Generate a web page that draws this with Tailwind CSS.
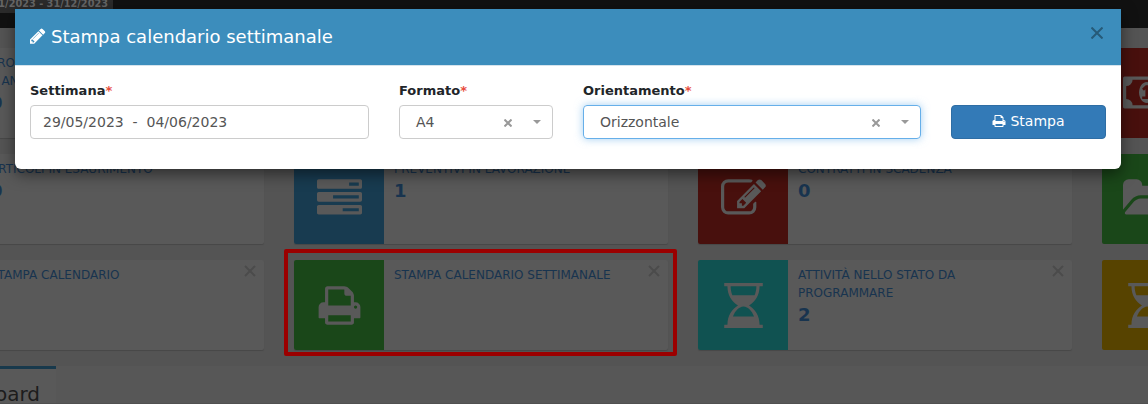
<!DOCTYPE html>
<html lang="it">
<head>
<meta charset="utf-8">
<title>Stampa calendario settimanale</title>
<script src="https://cdn.jsdelivr.net/npm/@tailwindcss/browser@4"></script>
</head>
<body class="relative h-[404px] w-[1148px] overflow-hidden bg-[#545454] font-['DejaVu_Sans',sans-serif] text-sm">
<svg class="hidden">
  <symbol id="print" viewBox="0 0 1792 1792"><path d="M448 1536h896v-256h-896v256zm0-640h896v-384h-160q-40 0-68-28t-28-68v-160h-640v640zm1152 64q0-26-19-45t-45-19-45 19-19 45 19 45 45 19 45-19 19-45zm128 0v416q0 13-9.500 22.500t-22.500 9.500h-224v160q0 40-28 68t-68 28h-960q-40 0-68-28t-28-68v-160h-224q-13 0-22.500-9.500t-9.500-22.500v-416q0-79 56.500-135.500t135.500-56.500h64v-544q0-40 28-68t68-28h672q40 0 88 20t76 48l152 152q28 28 48 76t20 88v256h64q79 0 135.500 56.500t56.500 135.500z"/></symbol>
  <symbol id="glass" viewBox="0 0 1792 1792"><path fill-rule="evenodd" d="M128 0h1536v128h-128c0 370-185 630-420 768 235 138 420 398 420 768h128v128H128v-128h128c0-370 185-630 420-768C441 758 256 498 256 128H128zM384 128c0 135 26 255 70 360h884c44-105 70-225 70-360zM896 940c-190 20-330 170-420 396h840c-90-226-230-376-420-396z"/></symbol>
</svg>

<header class="h-7 bg-[#111]">
  <div class="flex h-[13px] w-[113px] justify-end overflow-hidden bg-[#2b2b2b] pr-[5px]">
    <p class="-mt-[4px] text-[9.75px] leading-[15px] font-bold whitespace-nowrap text-[#666]">01/01/2023 - 31/12/2023</p>
  </div>
</header>

<main class="-ml-[110px] grid w-[1586px] grid-cols-[repeat(4,374px)] grid-rows-[repeat(3,90px)] gap-x-[30px] gap-y-4 pt-5 text-xs leading-[18px] text-[#18344f]">
  <section class="flex rounded-xs bg-[#595959] shadow-[0_1px_1px_rgba(0,0,0,0.15)]">
    <div class="w-[90px] shrink-0"></div>
    <div class="px-2.5 pt-1.5"><p>PRO</p><p>E AN</p><p class="text-lg leading-[26px] font-bold">0</p></div>
  </section>
  <section></section>
  <section></section>
  <section class="flex rounded-xs bg-[#595959]">
    <div class="flex w-[90px] items-center justify-center bg-[#48100d] pb-px">
      <svg class="h-[45px] w-12 fill-[#595959]" viewBox="0 0 1920 1792"><path d="M768 1152h384v-96h-128v-448h-114l-148 137 77 80q42-37 55-57h2v288h-128v96zm512-256q0 70-21 142t-59.500 134-101.500 101-138 39-138-39-101.500-101-59.500-134-21-142 21-142 59.500-134 101.500-101 138-39 138 39 101.500 101 59.500 134 21 142zm512 256v-512q-106 0-181-75t-75-181h-1152q0 106-75 181t-181 75v512q106 0 181 75t75 181h1152q0-106 75-181t181-75zm128-832v1152q0 26-19 45t-45 19h-1792q-26 0-45-19t-19-45v-1152q0-26 19-45t45-19h1792q26 0 45 19t19 45z"/></svg>
    </div>
  </section>

  <section class="flex rounded-xs bg-[#595959] shadow-[0_1px_1px_rgba(0,0,0,0.15)]">
    <div class="w-[90px] shrink-0"></div>
    <div class="px-2.5 pt-1.5"><p>ARTICOLI IN ESAURIMENTO</p><p class="text-lg leading-[26px] font-bold">0</p></div>
  </section>
  <section class="flex rounded-xs bg-[#595959] shadow-[0_1px_1px_rgba(0,0,0,0.15)]">
    <div class="flex w-[90px] shrink-0 items-center justify-center rounded-l-xs bg-[#183b50] pb-px">
      <svg class="size-[45px] fill-[#595959]" viewBox="0 0 1792 1792"><path d="M1024 1408h640v-128h-640v128zm-384-512h1024v-128h-1024v128zm640-512h384v-128h-384v128zm512 832v256q0 26-19 45t-45 19h-1664q-26 0-45-19t-19-45v-256q0-26 19-45t45-19h1664q26 0 45 19t19 45zm0-512v256q0 26-19 45t-45 19h-1664q-26 0-45-19t-19-45v-256q0-26 19-45t45-19h1664q26 0 45 19t19 45zm0-512v256q0 26-19 45t-45 19h-1664q-26 0-45-19t-19-45v-256q0-26 19-45t45-19h1664q26 0 45 19t19 45z"/></svg>
    </div>
    <div class="px-2.5 pt-1.5"><p>PREVENTIVI IN LAVORAZIONE</p><p class="text-lg leading-[26px] font-bold">1</p></div>
  </section>
  <section class="flex rounded-xs bg-[#595959] shadow-[0_1px_1px_rgba(0,0,0,0.15)]">
    <div class="flex w-[90px] shrink-0 items-center justify-center rounded-l-xs bg-[#48100d] pb-px">
      <svg class="size-[45px] fill-[#595959]" viewBox="0 0 1792 1792"><path d="M888 1184l116-116-152-152-116 116v56h96v96h56zm440-720q-16-16-33 1l-350 350q-17 17-1 33t33-1l350-350q17-17 1-33zm80 594v190q0 119-84.500 203.500t-203.500 84.500h-832q-119 0-203.500-84.500t-84.500-203.500v-832q0-119 84.500-203.500t203.500-84.500h832q63 0 117 25 15 7 18 23 3 17-9 29l-49 49q-14 14-32 8-23-6-45-6h-832q-66 0-113 47t-47 113v832q0 66 47 113t113 47h832q66 0 113-47t47-113v-126q0-13 9-22l64-64q15-15 35-7t20 29zm-96-738l288 288-672 672h-288v-288zm444 132l-92 92-288-288 92-92q28-28 68-28t68 28l152 152q28 28 28 68t-28 68z"/></svg>
    </div>
    <div class="px-2.5 pt-1.5"><p>CONTRATTI IN SCADENZA</p><p class="text-lg leading-[26px] font-bold">0</p></div>
  </section>
  <section class="flex rounded-xs bg-[#595959]">
    <div class="flex w-[90px] items-center justify-center rounded-l-xs bg-[#1a4719] pb-px">
      <svg class="h-[45px] w-12 fill-[#595959]" viewBox="0 0 1920 1792"><path d="M1879 952q0 31-31 66l-336 396q-43 51-120.500 86.500t-143.500 35.500h-1088q-34 0-60.500-13t-26.500-43q0-31 31-66l336-396q43-51 120.500-86.500t143.500-35.500h1088q34 0 60.500 13t26.500 43zm-343-344v160h-832q-94 0-197 47.500t-164 119.500l-337 396-5 6q0-4-.5-12.500t-.5-12.500v-960q0-92 66-158t158-66h320q92 0 158 66t66 158v32h544q92 0 158 66t66 158z"/></svg>
    </div>
  </section>

  <section class="flex rounded-xs bg-[#595959] shadow-[0_1px_1px_rgba(0,0,0,0.15)]">
    <div class="w-[90px] shrink-0"></div>
    <div class="grow px-2.5 pt-1.5"><p>STAMPA CALENDARIO</p></div>
    <svg class="mt-[5px] mr-2 size-3 stroke-[#4b4b4b] stroke-2" viewBox="0 0 12 12"><path d="M1 1l10 10M11 1L1 11"/></svg>
  </section>
  <section class="relative flex rounded-xs bg-[#595959] shadow-[0_1px_1px_rgba(0,0,0,0.15)]">
    <div class="flex w-[90px] shrink-0 items-center justify-center rounded-l-xs bg-[#1a4719]"><svg class="size-[45px] fill-[#595959]"><use href="#print"/></svg></div>
    <div class="grow px-2.5 pt-1.5"><p>STAMPA CALENDARIO SETTIMANALE</p></div>
    <svg class="mt-[5px] mr-2 size-3 stroke-[#4b4b4b] stroke-2" viewBox="0 0 12 12"><path d="M1 1l10 10M11 1L1 11"/></svg>
    <div class="absolute -top-[11.500px] -left-[10.500px] h-[107px] w-[393px] rounded-xs border-4 border-[#9b0000]"></div>
  </section>
  <section class="flex rounded-xs bg-[#595959] shadow-[0_1px_1px_rgba(0,0,0,0.15)]">
    <div class="flex w-[90px] shrink-0 items-center justify-center rounded-l-xs bg-[#105251]"><svg class="size-[45px] fill-[#595959]"><use href="#glass"/></svg></div>
    <div class="grow px-2.5 pt-1.5"><p>ATTIVITÀ NELLO STATO DA<br>PROGRAMMARE</p><p class="text-lg leading-[26px] font-bold">2</p></div>
    <svg class="mt-[5px] mr-2 size-3 shrink-0 stroke-[#4b4b4b] stroke-2" viewBox="0 0 12 12"><path d="M1 1l10 10M11 1L1 11"/></svg>
  </section>
  <section class="flex rounded-xs bg-[#595959]">
    <div class="flex w-[90px] items-center justify-center rounded-l-xs bg-[#574300]"><svg class="size-[45px] fill-[#595959]"><use href="#glass"/></svg></div>
  </section>
</main>

<nav class="mt-4 h-[38px] border-b border-[#505050] bg-[#575757]">
  <div class="flex h-[37px] w-14 justify-end overflow-hidden border-t-3 border-[#18394c] bg-[#595959] pt-[11px] pr-4 text-xl leading-7 text-[#1c1c1c]">Dashboard</div>
</nav>

<div class="absolute top-[9px] left-[15px] w-[1106px] rounded-b-md bg-white shadow-[0_5px_15px_rgba(0,0,0,0.5)]">
  <div class="flex h-[57px] items-start border-b border-[#d5e3ec] bg-[#3c8dbc] bg-clip-padding px-[15px] pt-[14px] text-white">
    <svg class="mt-[4px] h-[18px] w-[18px] fill-white" viewBox="128 0 1792 1792"><path d="M491 1536l91-91-235-235-91 91v107h128v128h107zm523-928q0-22-22-22-10 0-17 7l-542 542q-7 7-7 17 0 22 22 22 10 0 17-7l542-542q7-7 7-17zm-54-192l416 416-832 832h-416v-416zm683 96q0 53-37 90l-166 166-416-416 166-165q36-38 90-38 53 0 91 38l235 234q37 39 37 91z"/></svg>
    <h4 class="ml-[3px] grow text-lg leading-[27px]">Stampa calendario settimanale</h4>
    <svg class="mt-1 mr-[3px] size-3 stroke-[#265a78] stroke-2" viewBox="0 0 12 12"><path d="M.5 .5l11 11M11.500 .5L.5 11.500"/></svg>
  </div>
  <form class="flex h-[103px] gap-[30px] px-[15px] pt-[15px] text-[#555]">
    <div class="w-[339px]">
      <label class="block h-6 text-[13px] leading-5 font-bold text-[#212529]">Settimana<span class="text-[#e74c3c]">*</span></label>
      <div class="flex h-[34px] items-center rounded border border-[#ccc] px-3 whitespace-pre">29/05/2023  -  04/06/2023</div>
    </div>
    <div class="w-[154px]">
      <label class="block h-6 text-[13px] leading-5 font-bold text-[#212529]">Formato<span class="text-[#e74c3c]">*</span></label>
      <div class="flex h-[34px] items-center rounded border border-[#ccc] pr-[11px] pl-4"><span class="grow">A4</span><svg class="mt-px mr-[21px] size-2 stroke-[#999] stroke-2" viewBox="0 0 8 8"><path d="M.5.5l7 7M7.500.5l-7 7"/></svg><svg class="h-1 w-2 fill-[#999]" viewBox="0 0 8 4"><path d="M0 0h8L4 4z"/></svg></div>
    </div>
    <div class="w-[338px]">
      <label class="block h-6 text-[13px] leading-5 font-bold text-[#212529]">Orientamento<span class="text-[#e74c3c]">*</span></label>
      <div class="flex h-[34px] items-center rounded border border-[#66afe9] pr-[11px] pl-4 shadow-[0_0_8px_rgba(102,175,233,0.6)]"><span class="grow">Orizzontale</span><svg class="mt-px mr-[21px] size-2 stroke-[#999] stroke-2" viewBox="0 0 8 8"><path d="M.5.5l7 7M7.500.5l-7 7"/></svg><svg class="h-1 w-2 fill-[#999]" viewBox="0 0 8 4"><path d="M0 0h8L4 4z"/></svg></div>
    </div>
    <button type="button" class="mt-6 flex h-[34px] w-[155px] items-center justify-center gap-1 rounded border border-[#2e6da4] bg-[#337ab7] pb-0.5 text-white"><svg class="size-3.5 fill-white"><use href="#print"/></svg><span>Stampa</span></button>
  </form>
</div>
</body>
</html>
